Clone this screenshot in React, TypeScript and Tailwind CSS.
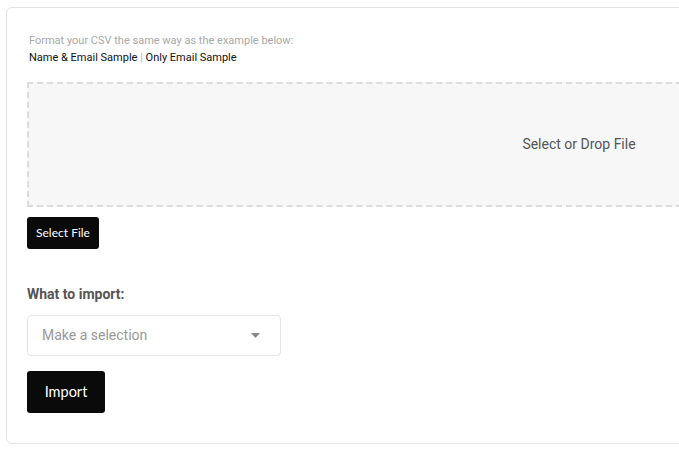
const App = () => {
  return (
    <div className="w-[679px] h-[451px] overflow-hidden bg-white" style={{ fontFamily: "Roboto, sans-serif" }}>
      <div className="ml-[6px] mt-[7px] w-[1150px] h-[437px] border border-[#e3e3e3] rounded-[6px] bg-white px-5 pt-[26px]">
        <p className="ml-[2px] text-[11px] leading-[13px] text-[#a8a8a8]">Format your CSV the same way as the example below:</p>
        <p className="ml-[2px] mt-[4px] text-[11px] leading-[13px] text-[#111]">
          Name &amp; Email Sample <span className="text-[#bbb]">|</span> Only Email Sample
        </p>
        <div className="mt-[18px] h-[125px] w-[1104px] border-2 border-dashed border-[#dcdcdc] bg-[#f7f7f7] flex items-center justify-center">
          <span className="text-[14px] text-[#555]">Select or Drop File</span>
        </div>
        <button
          className="mt-[10px] h-[32px] w-[72px] rounded-[3px] bg-[#0a0a0a] text-white text-[12px]"
          style={{ fontFamily: "Lato, sans-serif" }}
        >
          Select File
        </button>
        <h3 className="mt-[37px] text-[14px] leading-[17px] font-bold text-[#555]">What to import:</h3>
        <div className="mt-[12px] h-[41px] w-[254px] border border-[#e2e5ea] rounded-[4px] flex items-center justify-between pl-[14px] pr-[20px]">
          <span className="text-[14px] text-[#999]">Make a selection</span>
          <svg width="9" height="5" viewBox="0 0 9 5">
            <path d="M0 0h9L4.5 5z" fill="#888" />
          </svg>
        </div>
        <button
          className="mt-[15px] h-[42px] w-[78px] rounded-[3px] bg-[#0a0a0a] text-white text-[14.5px]"
          style={{ fontFamily: "Lato, sans-serif" }}
        >
          Import
        </button>
      </div>
    </div>
  );
};

export default App;
